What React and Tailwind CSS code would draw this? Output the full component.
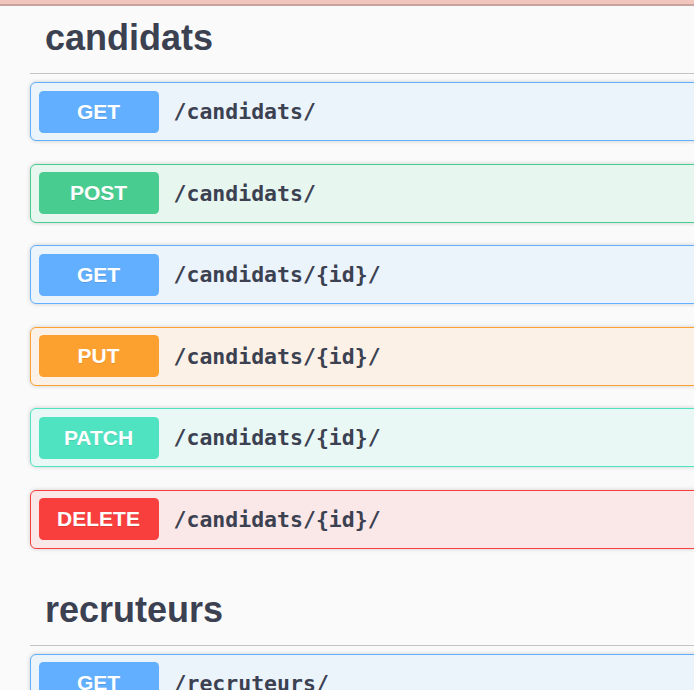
import React from "react";

const METHODS = {
  GET: { badge: "bg-[#61affe]", border: "border-[#61affe]", bg: "bg-[#ebf3fb]" },
  POST: { badge: "bg-[#49cc90]", border: "border-[#49cc90]", bg: "bg-[#e8f6f0]" },
  PUT: { badge: "bg-[#fca130]", border: "border-[#fca130]", bg: "bg-[#fbf1e6]" },
  PATCH: { badge: "bg-[#50e3c2]", border: "border-[#50e3c2]", bg: "bg-[#e9f8f5]" },
  DELETE: { badge: "bg-[#f93e3e]", border: "border-[#f93e3e]", bg: "bg-[#fae7e7]" },
};

function Op({ method, path }) {
  const m = METHODS[method];
  return (
    <div
      className={`flex items-center h-[59px] mb-[22.5px] border ${m.border} ${m.bg} rounded-[6px] shadow-[0_0_4px_rgba(0,0,0,0.19)] pl-[7.5px] pr-[7.5px]`}
    >
      <div
        className={`${m.badge} w-[120px] h-[42px] shrink-0 rounded-[4.5px] flex items-center justify-center text-white font-bold text-[21px] [text-shadow:0_1px_0_rgba(0,0,0,0.1)]`}
        style={{ fontFamily: '"Liberation Sans", Arial, sans-serif' }}
      >
        {method}
      </div>
      <div
        className="pl-[15px] pt-[2px] text-[#3b4151] font-bold text-[21.5px] whitespace-nowrap"
        style={{ fontFamily: '"DejaVu Sans Mono", monospace' }}
      >
        {path}
      </div>
    </div>
  );
}

function Section({ title, ops }) {
  return (
    <div className="pb-[16.5px]">
      <div className="border-b border-[#c1c3c7] pl-[15px] pt-[4px] pb-[17px] mb-[8px]">
        <h3
          className="text-[36px] leading-[36px] font-bold text-[#3b4151]"
          style={{ fontFamily: '"Liberation Sans", Arial, sans-serif' }}
        >
          {title}
        </h3>
      </div>
      {ops.map((o, i) => (
        <Op key={i} method={o[0]} path={o[1]} />
      ))}
    </div>
  );
}

export default function App() {
  return (
    <div className="w-[694px] h-[690px] overflow-hidden bg-[#fafafa]">
      <div className="h-[4px] bg-[#f2c6bd]" />
      <div className="h-[2px] bg-[#c7a39d]" />
      <div className="pl-[30px] pt-[10px] w-[760px]">
        <Section
          title="candidats"
          ops={[
            ["GET", "/candidats/"],
            ["POST", "/candidats/"],
            ["GET", "/candidats/{id}/"],
            ["PUT", "/candidats/{id}/"],
            ["PATCH", "/candidats/{id}/"],
            ["DELETE", "/candidats/{id}/"],
          ]}
        />
        <Section title="recruteurs" ops={[["GET", "/recruteurs/"]]} />
      </div>
    </div>
  );
}
